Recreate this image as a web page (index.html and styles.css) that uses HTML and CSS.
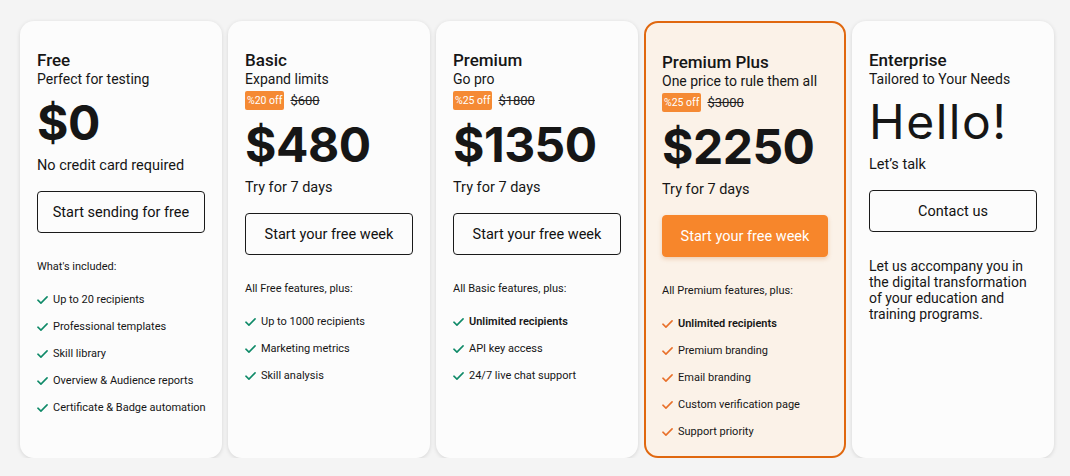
FILE: index.html
```html
<!DOCTYPE html>
<html lang="en">
<head>
<meta charset="utf-8">
<title>Pricing</title>
<link rel="stylesheet" href="styles.css">
</head>
<body>
<div class="plans">
  <section class="card">
    <h2 class="title">Free</h2>
    <p class="subtitle">Perfect for testing</p>
    <div class="price">$0</div>
    <p class="note">No credit card required</p>
    <a class="btn">Start sending for free</a>
    <p class="list-head">What's included:</p>
    <ul class="features">
      <li><svg class="check" viewBox="0 0 12 10"><polyline points="1,5.2 4.3,8.4 11,1.6"/></svg>Up to 20 recipients</li>
      <li><svg class="check" viewBox="0 0 12 10"><polyline points="1,5.2 4.3,8.4 11,1.6"/></svg>Professional templates</li>
      <li><svg class="check" viewBox="0 0 12 10"><polyline points="1,5.2 4.3,8.4 11,1.6"/></svg>Skill library</li>
      <li><svg class="check" viewBox="0 0 12 10"><polyline points="1,5.2 4.3,8.4 11,1.6"/></svg>Overview &amp; Audience reports</li>
      <li><svg class="check" viewBox="0 0 12 10"><polyline points="1,5.2 4.3,8.4 11,1.6"/></svg>Certificate &amp; Badge automation</li>
    </ul>
  </section>

  <section class="card">
    <h2 class="title">Basic</h2>
    <p class="subtitle">Expand limits</p>
    <div class="discount"><span class="badge">%20 off</span><s class="old">$600</s></div>
    <div class="price">$480</div>
    <p class="note">Try for 7 days</p>
    <a class="btn">Start your free week</a>
    <p class="list-head">All Free features, plus:</p>
    <ul class="features">
      <li><svg class="check" viewBox="0 0 12 10"><polyline points="1,5.2 4.3,8.4 11,1.6"/></svg>Up to 1000 recipients</li>
      <li><svg class="check" viewBox="0 0 12 10"><polyline points="1,5.2 4.3,8.4 11,1.6"/></svg>Marketing metrics</li>
      <li><svg class="check" viewBox="0 0 12 10"><polyline points="1,5.2 4.3,8.4 11,1.6"/></svg>Skill analysis</li>
    </ul>
  </section>

  <section class="card">
    <h2 class="title">Premium</h2>
    <p class="subtitle">Go pro</p>
    <div class="discount"><span class="badge">%25 off</span><s class="old">$1800</s></div>
    <div class="price">$1350</div>
    <p class="note">Try for 7 days</p>
    <a class="btn">Start your free week</a>
    <p class="list-head">All Basic features, plus:</p>
    <ul class="features">
      <li class="strong"><svg class="check" viewBox="0 0 12 10"><polyline points="1,5.2 4.3,8.4 11,1.6"/></svg>Unlimited recipients</li>
      <li><svg class="check" viewBox="0 0 12 10"><polyline points="1,5.2 4.3,8.4 11,1.6"/></svg>API key access</li>
      <li><svg class="check" viewBox="0 0 12 10"><polyline points="1,5.2 4.3,8.4 11,1.6"/></svg>24/7 live chat support</li>
    </ul>
  </section>

  <section class="card card-featured">
    <h2 class="title">Premium Plus</h2>
    <p class="subtitle">One price to rule them all</p>
    <div class="discount"><span class="badge">%25 off</span><s class="old">$3000</s></div>
    <div class="price">$2250</div>
    <p class="note">Try for 7 days</p>
    <a class="btn btn-primary">Start your free week</a>
    <p class="list-head">All Premium features, plus:</p>
    <ul class="features">
      <li class="strong"><svg class="check" viewBox="0 0 12 10"><polyline points="1,5.2 4.3,8.4 11,1.6"/></svg>Unlimited recipients</li>
      <li><svg class="check" viewBox="0 0 12 10"><polyline points="1,5.2 4.3,8.4 11,1.6"/></svg>Premium branding</li>
      <li><svg class="check" viewBox="0 0 12 10"><polyline points="1,5.2 4.3,8.4 11,1.6"/></svg>Email branding</li>
      <li><svg class="check" viewBox="0 0 12 10"><polyline points="1,5.2 4.3,8.4 11,1.6"/></svg>Custom verification page</li>
      <li><svg class="check" viewBox="0 0 12 10"><polyline points="1,5.2 4.3,8.4 11,1.6"/></svg>Support priority</li>
    </ul>
  </section>

  <section class="card">
    <h2 class="title">Enterprise</h2>
    <p class="subtitle">Tailored to Your Needs</p>
    <div class="price price-light">Hello!</div>
    <p class="note">Let’s talk</p>
    <a class="btn">Contact us</a>
    <p class="blurb">Let us accompany you in the digital transformation of your education and training programs.</p>
  </section>
</div>
</body>
</html>
```

FILE: styles.css
```css
* { box-sizing: border-box; }

body {
  margin: 0;
  background: #f4f4f4;
  font-family: Roboto, "Noto Sans", Arial, sans-serif;
  color: #161616;
}

.plans {
  display: flex;
  gap: 6px;
  padding: 21px 0 0 20px;
}

.card {
  width: 202px;
  height: 437px;
  background: #fcfcfc;
  border-radius: 14px;
  box-shadow: 0 1px 4px rgba(0, 0, 0, 0.13);
  padding: 29px 17px 0 17px;
  display: flex;
  flex-direction: column;
}

.card-featured {
  background: #fbf2e8;
  border: 2px solid #e0680f;
  padding: 29px 16px 0 16px;
  box-shadow: none;
}

.title {
  margin: 0;
  font-size: 17px;
  line-height: 20px;
  font-weight: 500;
}

.subtitle {
  margin: 0;
  font-size: 14px;
  line-height: 18px;
}

.discount {
  display: flex;
  align-items: center;
  gap: 6px;
  margin-top: 3px;
  height: 19px;
}

.badge {
  background: #f58a34;
  color: #fff;
  font-size: 10.5px;
  line-height: 19px;
  padding: 0 2px;
  border-radius: 2px;
}

.old {
  font-size: 13px;
  color: #222;
}

.price {
  margin-top: 7px;
  font-family: Inter, Roboto, sans-serif;
  font-size: 48px;
  line-height: 56px;
  font-weight: 700;
  letter-spacing: -0.5px;
}

.price-light {
  margin-top: 6px;
  font-weight: 400;
  letter-spacing: 1.5px;
}

.note {
  margin: 6px 0 0;
  font-size: 14.5px;
  line-height: 18px;
}

.btn {
  margin-top: 16px;
  height: 42px;
  border: 1.5px solid #1a1a1a;
  border-radius: 4px;
  display: flex;
  align-items: center;
  justify-content: center;
  font-size: 14.5px;
  font-weight: 400;
  color: #111;
}

.btn-primary {
  background: #f7862b;
  border-color: #f7862b;
  color: #fff;
  box-shadow: 0 2px 4px rgba(200, 100, 20, 0.25);
}

.list-head {
  margin: 27px 0 0;
  font-size: 11px;
  line-height: 14px;
}

.features {
  list-style: none;
  margin: 19px 0 0;
  padding: 0;
  display: flex;
  flex-direction: column;
  gap: 13px;
}

.features li {
  display: flex;
  align-items: center;
  gap: 5px;
  font-size: 11px;
  line-height: 14px;
  white-space: nowrap;
}

.features li.strong { font-weight: 600; }

.check {
  width: 11px;
  height: 10px;
  flex: none;
  fill: none;
  stroke: #0f8a68;
  stroke-width: 1.7;
  stroke-linecap: round;
  stroke-linejoin: round;
}

.card-featured .check { stroke: #e8702a; }

.blurb {
  margin: 26px 0 0;
  font-size: 14px;
  line-height: 16px;
}
```
